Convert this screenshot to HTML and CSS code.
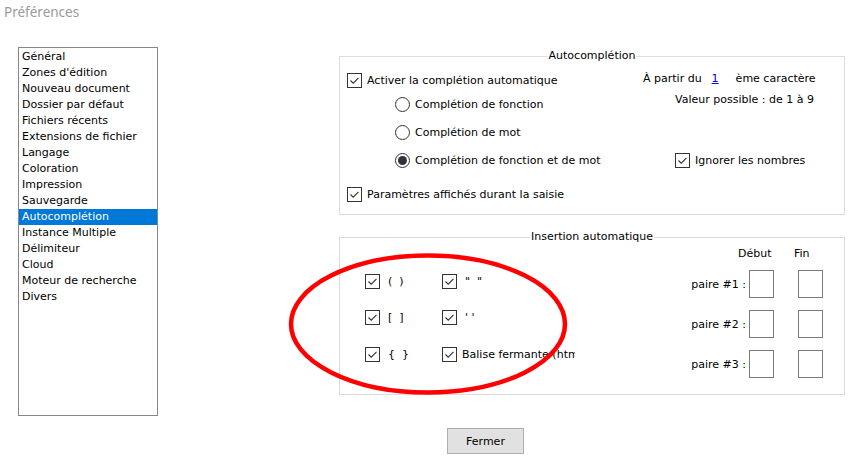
FILE: index.html
```html
<!DOCTYPE html>
<html lang="fr">
<head>
<meta charset="utf-8">
<title>Préférences</title>
<link rel="stylesheet" href="styles.css">
</head>
<body>
<div class="window">
  <div class="title">Préférences</div>
  <div class="main">
    <ul class="cats">
      <li>Général</li>
      <li>Zones d'édition</li>
      <li>Nouveau document</li>
      <li>Dossier par défaut</li>
      <li>Fichiers récents</li>
      <li>Extensions de fichier</li>
      <li>Langage</li>
      <li>Coloration</li>
      <li>Impression</li>
      <li>Sauvegarde</li>
      <li class="sel">Autocomplétion</li>
      <li>Instance Multiple</li>
      <li>Délimiteur</li>
      <li>Cloud</li>
      <li>Moteur de recherche</li>
      <li>Divers</li>
    </ul>
    <div class="panel">
      <div class="group g1">
        <div class="group-title">Autocomplétion</div>
        <div class="g1-body">
          <div class="g1-left">
            <div class="row r-act"><span class="cb"><svg viewBox="0 0 13 13"><path d="M2.5 6.5 L5.2 9.2 L10.5 3.8" /></svg></span><span>Activer la complétion automatique</span></div>
            <div class="row radio-row r1"><span class="rb"></span><span>Complétion de fonction</span></div>
            <div class="row radio-row r2"><span class="rb"></span><span>Complétion de mot</span></div>
            <div class="row radio-row r2"><span class="rb on"></span><span>Complétion de fonction et de mot</span></div>
            <div class="row r-par"><span class="cb"><svg viewBox="0 0 13 13"><path d="M2.5 6.5 L5.2 9.2 L10.5 3.8" /></svg></span><span>Paramètres affichés durant la saisie</span></div>
          </div>
          <div class="g1-right">
            <div class="row rr1"><span>À partir du</span><span class="num">1</span><span>ème caractère</span></div>
            <div class="row rr2">Valeur possible : de 1 à 9</div>
            <div class="row rr3"><span class="cb"><svg viewBox="0 0 13 13"><path d="M2.5 6.5 L5.2 9.2 L10.5 3.8" /></svg></span><span>Ignorer les nombres</span></div>
          </div>
        </div>
      </div>
      <div class="group g2">
        <div class="group-title">Insertion automatique</div>
        <div class="g2-body">
          <div class="pairs-auto">
            <div class="row"><span class="cb"><svg viewBox="0 0 13 13"><path d="M2.5 6.5 L5.2 9.2 L10.5 3.8" /></svg></span><span class="br">(&nbsp; )</span></div>
            <div class="row"><span class="cb"><svg viewBox="0 0 13 13"><path d="M2.5 6.5 L5.2 9.2 L10.5 3.8" /></svg></span><span class="br">"&nbsp; "</span></div>
            <div class="row"><span class="cb"><svg viewBox="0 0 13 13"><path d="M2.5 6.5 L5.2 9.2 L10.5 3.8" /></svg></span><span class="br">[&nbsp; ]</span></div>
            <div class="row"><span class="cb"><svg viewBox="0 0 13 13"><path d="M2.5 6.5 L5.2 9.2 L10.5 3.8" /></svg></span><span class="br">'&nbsp;'</span></div>
            <div class="row"><span class="cb"><svg viewBox="0 0 13 13"><path d="M2.5 6.5 L5.2 9.2 L10.5 3.8" /></svg></span><span class="br">{&nbsp; }</span></div>
            <div class="row"><span class="cb"><svg viewBox="0 0 13 13"><path d="M2.5 6.5 L5.2 9.2 L10.5 3.8" /></svg></span><span class="clip">Balise fermante (html/xml)</span></div>
          </div>
          <div class="pairs-user">
            <span></span><span class="hd hd-deb">Début</span><span class="hd hd-fin">Fin</span>
            <span class="plabel">paire #1 :</span><span class="edit"></span><span class="edit e2"></span>
            <span class="plabel">paire #2 :</span><span class="edit"></span><span class="edit e2"></span>
            <span class="plabel">paire #3 :</span><span class="edit"></span><span class="edit e2"></span>
          </div>
        </div>
      </div>
    </div>
  </div>
  <div class="footer"><button class="btn" type="button">Fermer</button></div>
  <svg class="annot" width="858" height="462" viewBox="0 0 858 462"><ellipse cx="428" cy="324" rx="137" ry="68.5" /></svg>
</div>
</body>
</html>
```

FILE: styles.css
```css
* { box-sizing: border-box; }
html, body { margin: 0; padding: 0; background: #fff; }
body {
  font-family: "DejaVu Sans", "Liberation Sans", sans-serif;
  font-size: 11px;
  color: #000;
}
.window {
  position: relative;
  width: 858px;
  height: 462px;
  overflow: hidden;
}
.title {
  height: 47px;
  padding: 1px 0 0 4px;
  font-family: "Noto Sans", "Open Sans", sans-serif;
  font-size: 13.5px;
  line-height: 22px;
  color: #9a9a9a;
}
.main {
  display: flex;
  align-items: flex-start;
}
.cats {
  list-style: none;
  margin: 0 0 0 18px;
  padding: 1px 0 0 0;
  width: 140px;
  height: 369px;
  border: 1px solid #828790;
}
.cats li {
  height: 16px;
  line-height: 16px;
  padding-left: 3px;
  white-space: nowrap;
}
.cats li.sel {
  background: #0078d7;
  color: #fff;
}
.panel {
  margin-left: 181px;
  padding-top: 9px;
  width: 506px;
}
.group {
  position: relative;
  border: 1px solid #dcdcdc;
}
.group-title {
  position: absolute;
  top: -9px;
  left: 50%;
  transform: translateX(-50%);
  background: #fff;
  padding: 0 1px;
  line-height: 16px;
  white-space: nowrap;
}
.g1 { height: 159px; }
.g2 { height: 158px; margin-top: 22px; }
.row {
  display: flex;
  align-items: center;
  height: 20px;
  gap: 5px;
  white-space: nowrap;
}
.cb {
  flex: none;
  width: 15px;
  height: 15px;
  border: 1px solid #333;
  background: #fff;
  display: flex;
  align-items: center;
  justify-content: center;
}
.cb svg { width: 13px; height: 13px; }
.cb path { fill: none; stroke: #333; stroke-width: 1.1; }
.rb {
  flex: none;
  width: 15px;
  height: 15px;
  border: 1px solid #333;
  border-radius: 50%;
  display: flex;
  align-items: center;
  justify-content: center;
}
.rb.on::after {
  content: "";
  width: 9px;
  height: 9px;
  border-radius: 50%;
  background: #333;
}
.g1-body {
  display: flex;
}
.g1-left {
  width: 303px;
  padding-left: 7px;
  padding-top: 13px;
}
.radio-row { padding-left: 48px; }
.r1 { margin-top: 4px; }
.r2 { margin-top: 8px; }
.r-par { margin-top: 14px; }
.g1-right {
  padding-top: 11px;
}
.num {
  color: #0000ee;
  text-decoration: underline;
  margin: 0 12px 0 5px;
}
.rr2 { margin-top: 1px; padding-left: 32px; }
.rr3 { margin-top: 41px; padding-left: 32px; }
.g2-body {
  display: flex;
  justify-content: space-between;
}
.pairs-auto {
  display: grid;
  grid-template-columns: 77px 133px;
  grid-auto-rows: 20px;
  row-gap: 16.5px;
  padding-left: 25px;
  padding-top: 33px;
}
.pairs-auto .row { overflow: hidden; }
.br { margin-left: 3px; white-space: pre; }
.clip { overflow: hidden; }
.pairs-user {
  display: grid;
  grid-template-columns: auto 25px 49px;
  grid-template-rows: 16px 28px 28px 28px;
  row-gap: 12px;
  padding-top: 4px;
  margin-right: 21px;
}
.hd {
  line-height: 16px;
  margin-top: 4px;
  white-space: nowrap;
}
.hd-deb { margin-left: -11px; }
.hd-fin { margin-left: 20px; }
.plabel {
  align-self: center;
  margin-right: 3px;
  white-space: nowrap;
}
.edit {
  display: block;
  width: 25px;
  height: 28px;
  border: 1px solid #7a7a7a;
  background: #fff;
}
.edit.e2 { margin-left: 24px; }
.footer {
  padding-top: 12px;
  padding-left: 447px;
}
.btn {
  width: 77px;
  height: 26px;
  background: #e1e1e1;
  border: 1px solid #adadad;
  border-radius: 0;
  font-family: "DejaVu Sans", "Liberation Sans", sans-serif;
  font-size: 11px;
  color: #000;
  padding: 0;
}
.annot {
  position: absolute;
  left: 0;
  top: 0;
  pointer-events: none;
}
.annot ellipse {
  fill: none;
  stroke: #ff0000;
  stroke-width: 4.5;
}
```
